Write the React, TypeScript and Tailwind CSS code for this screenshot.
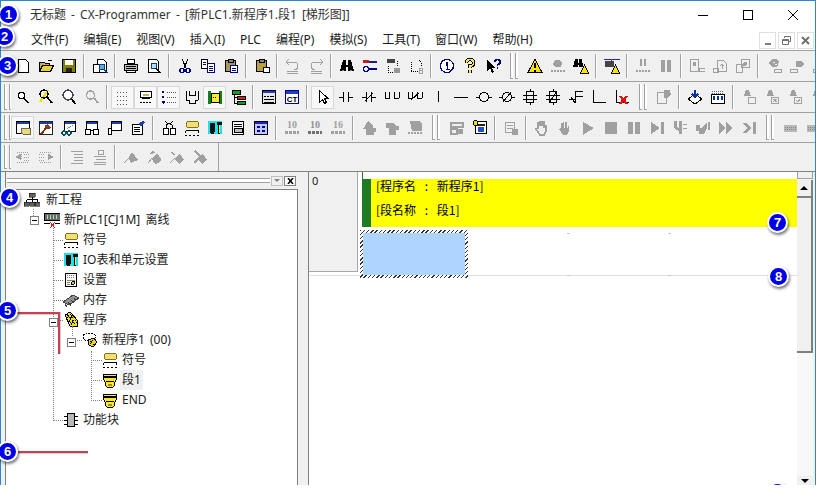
import type { ReactNode } from 'react';

const G = '#a0a0a0';
const K = '#000';

const num = (s: string, fill: string) => (
  <text x="8" y="8" textAnchor="middle" fontSize="10" fontWeight="700" fontFamily="'Liberation Serif', serif" fill={fill}>{s}</text>
);

// toolbar bitmaps, redrawn on a 16px grid
const icons: Record<string, ReactNode> = {
  newdoc: <path d="M3.5 1.5h7l3 3v10h-10z" fill="#fff" stroke={K} />,
  open: <><path d="M1.5 13.5v-9h5l1 1h4v2" fill="#c8b040" stroke={K} /><path d="M1.5 13.5l3-6h11l-3 6z" fill="#e8d040" stroke={K} /><path d="M10 3q2-2 4 0" fill="none" stroke={K} /></>,
  save: <><rect x="1.5" y="1.5" width="13" height="13" fill="#808000" stroke={K} /><rect x="4" y="2" width="8" height="5" fill="#fff" /><rect x="5" y="10" width="6" height="4" fill="#222" /></>,
  pdoc: <><path d="M5.5 1.5h6l3 3v10h-9z" fill="#fff" stroke={K} /><rect x="1.5" y="6.5" width="6" height="8" fill="#fff" stroke={K} /><circle cx="10" cy="9" r="3" fill="#6ac" stroke="#048" /><path d="M12 11l3 4" stroke="#048" strokeWidth="1.5" /></>,
  print: <><path d="M4.5 1.5h7v4h-7z" fill="#fff" stroke={K} /><path d="M1.5 6.5h13v6h-13z" fill="#c0c0c0" stroke={K} /><path d="M3.5 12.5h9v2h-9z" fill="#fff" stroke={K} /><path d="M3 8h10M3 10h10" stroke={K} /></>,
  preview: <><path d="M2.5 1.5h8l2 2v11h-10z" fill="#fff" stroke={K} /><circle cx="8" cy="8" r="3" fill="#bde" stroke="#048" /><path d="M10 10l4 5" stroke={K} strokeWidth="1.5" /></>,
  cut: <><path d="M5 1l4 9M11 1l-4 9" stroke={K} /><circle cx="5" cy="12.5" r="2" fill="none" stroke="#008" strokeWidth="1.5" /><circle cx="11" cy="12.5" r="2" fill="none" stroke="#008" strokeWidth="1.5" /></>,
  copy: <><path d="M1.5 1.5h6v9h-6z" fill="#fff" stroke={K} /><path d="M7.5 5.5h7v9h-7z" fill="#fff" stroke="#008" /><path d="M3 4h3M3 6h3M9 8h4M9 10h4M9 12h4" stroke="#008" /></>,
  paste: <><path d="M2.5 2.5h10v11h-10z" fill="#a89860" stroke={K} /><rect x="5" y="1" width="5" height="3" fill="#888" stroke={K} /><path d="M7.5 7.5h7v7h-7z" fill="#fff" stroke="#008" /><path d="M9 10h4M9 12h4" stroke="#008" /></>,
  paste2: <><path d="M2.5 2.5h10v11h-10z" fill="#b8a040" stroke={K} /><rect x="5" y="1" width="5" height="3" fill="#888" stroke={K} /><rect x="9.5" y="9.5" width="6" height="5" fill="#fff" stroke={K} /></>,
  undo: <path d="M4 7l-3-3 3-3M2 4h7q4 0 4 4t-4 3M2 13h11M2 15h11" fill="none" stroke={G} />,
  redo: <path d="M12 7l3-3-3-3M14 4H7q-4 0-4 4t4 3M3 13h11M3 15h11" fill="none" stroke={G} />,
  binoc: <><path d="M4 2h3v5h2V2h3l3 11H9V9H7v4H1z" fill={K} /><path d="M3 12h2M11 12h2" stroke="#888" /></>,
  tools: <><rect x="1" y="2" width="6" height="3" fill="#c02020" /><rect x="7" y="3" width="8" height="2" fill="#202080" /><circle cx="4" cy="11" r="2.5" fill="none" stroke="#008" strokeWidth="1.5" /><path d="M7 11h8" stroke="#008" strokeWidth="2" /></>,
  xref: <><rect x="2" y="1" width="8" height="4" fill="#444" /><path d="M3 8v6M3 14h5M12 3v5" stroke={K} strokeDasharray="1 1" /><rect x="9" y="10" width="6" height="5" fill="#999" /></>,
  xrefb: <><path d="M3 4v9M3 13h7M11 2l2 2v5" fill="none" stroke={K} strokeDasharray="1 1" /><path d="M11 10h2.500a1 1 0 010 2.500H11zM11 12.500h3v2.500h-3z" fill="none" stroke={G} /></>,
  info: <><circle cx="8" cy="8" r="6.500" fill="#fff" stroke="#000080" strokeWidth="1.400" /><path d="M6.500 7h2v4.500M6.500 11.500h4M8 4v1.500" stroke="#000080" strokeWidth="1.400" fill="none" /></>,
  help: <><path d="M4.500 5q0-3.500 3.500-3.500t3.500 3.500-3.500 3v2M8 12v2.500" fill="none" stroke={K} strokeWidth="3.400" /><path d="M4.500 5q0-3.500 3.500-3.500t3.500 3.500-3.500 3v2M8 12v2.500" fill="none" stroke="#f8e840" strokeWidth="1.400" /></>,
  whatis: <><path d="M2 2v11l3-3 2 5 2-1-2-4h4z" fill={K} /><path d="M10 4q0-2.500 2.500-2.500T15 4t-2.500 2.500V8M12.500 9v2" fill="none" stroke="#000080" strokeWidth="1.800" /></>,
  warn: <><path d="M8 1L1 14.500h14z" fill="#ffe000" stroke={K} /><path d="M8 5v5M8 11.500v2" stroke={K} strokeWidth="1.500" /></>,
  gfoot: <><path d="M5 2h5l2 3-1 4H5L3 6z" fill={G} /><path d="M1 13h14" stroke={G} strokeWidth="2" strokeDasharray="2 1" /></>,
  binw: <><path d="M2 1h2.500v4H6V1h2.500l2 8H6V7H5v2H0z" fill={K} /><path d="M11.500 7l4 8h-8z" fill="#ffe000" stroke={K} /></>,
  comm: <><path d="M0 1h16" stroke="#2020c0" /><path d="M7 1v2" stroke="#c02020" /><rect x="1" y="3" width="9" height="6" fill="#444" /><path d="M11.500 7l4 8h-8z" fill="#ffe000" stroke={K} /></>,
  gpause: <><path d="M5 1h2v7H5zM9 1h2v7H9z" fill={G} /><path d="M1 13h14" stroke={G} strokeWidth="2" strokeDasharray="2 1" /></>,
  pause: <path d="M3 2h4v12H3zM9 2h4v12H9z" fill={G} />,
  gdoc: <><path d="M1.500 1.500h8v12h-8z" fill="none" stroke={G} /><path d="M4 4h3v4H4z" fill={G} /><rect x="10" y="10" width="6" height="3" fill="none" stroke={G} /></>,
  gup: <><path d="M5.500 2.500h6l3 3v8h-9z" fill="none" stroke={G} /><path d="M10 11V6M8 8l2-2 2 2" fill="none" stroke={G} /><rect x="1" y="10" width="5" height="4" fill="none" stroke={G} /></>,
  gcmp: <><path d="M1.500 6.500h6v8h-6z" fill="none" stroke={G} /><path d="M6.500 1.500h8v8h-8z" fill="none" stroke={G} /><circle cx="10" cy="6" r="2" fill={G} /></>,
  gbug: <><path d="M6 1h5l2 3-2 5H6L3 5z" fill={G} /><path d="M7 4h2M9 6h2" stroke="#f0f0f0" /><rect x="8" y="11" width="7" height="3" fill="none" stroke={G} /></>,
  gsmall: <><path d="M7 3h6l2 3-3 3H7z" fill={G} /><rect x="1" y="11" width="7" height="3" fill="none" stroke={G} /></>,
  find: <><circle cx="6.500" cy="6.500" r="3" fill="#fff" stroke={K} strokeWidth="1.200" /><path d="M9 9l4 5" stroke={K} strokeWidth="1.500" /></>,
  findy: <><path d="M10 1L2 13" stroke="#f0e000" strokeWidth="2" /><circle cx="6" cy="5" r="4" fill="none" stroke={K} strokeWidth="1.300" /><path d="M9 8l5 6" stroke={K} strokeWidth="1.800" /></>,
  findk: <><circle cx="7" cy="6" r="5" fill="#fff" stroke="#445" strokeWidth="1.300" /><path d="M10.500 10l4 5" stroke={K} strokeWidth="1.800" /></>,
  findg: <><circle cx="6.500" cy="6" r="4" fill="none" stroke={G} strokeWidth="1.500" /><path d="M10 9l4 5" stroke={G} strokeWidth="2" /></>,
  grid: <path d="M2 3h12M2 7h12M2 11h12M2 15h12" stroke="#555" strokeDasharray="1 2" />,
  note: <><path d="M2.500 2.500h11v6h-11z" fill="#fff" stroke={K} /><path d="M4 9.500h8" stroke={K} /><rect x="5" y="5" width="6" height="2" fill="#c0b060" /><path d="M2 13h12" stroke={K} strokeDasharray="2 1" /></>,
  list: <><path d="M6 3h9M6 8h9M6 13h9" stroke="#555" strokeDasharray="1 1" /><path d="M2 2v2M2 7v2M1 13h3M2.500 12v3" stroke="#008" strokeWidth="1.500" /></>,
  hh: <path d="M2 2v9M14 2v9M5 2v4h6V2M2 11h3v3h6v-3h3" fill="none" stroke={K} />,
  ylist: <><path d="M1 2h3v13H1zM12 2h3v13h-3z" fill="#108010" /><rect x="4" y="4" width="8" height="9" fill="#ffe830" stroke={K} /><path d="M6 8h4" stroke={K} strokeDasharray="1 1" /></>,
  gtree: <><rect x="2" y="1" width="8" height="4" fill="#10a010" stroke={K} /><rect x="7" y="7" width="8" height="3" fill="#e02020" stroke={K} /><rect x="7" y="12" width="8" height="3" fill="#10a010" stroke={K} /><path d="M4 5v9h3M4 8h3" fill="none" stroke={K} /></>,
  sma: <><rect x="1.500" y="1.500" width="13" height="13" fill="#e8e8e8" stroke={K} /><rect x="2" y="2" width="12" height="2" fill="#2040c0" /><path d="M3 7h2M6 7h2M9 7h4M3 10h10M3 13h10" stroke={K} /></>,
  ct: <><rect x="1.500" y="1.500" width="13" height="13" fill="#fff" stroke="#008" /><rect x="2" y="2" width="12" height="3" fill="#2040c0" /><text x="8" y="13" textAnchor="middle" fontSize="8" fontWeight="700" fontFamily="'Liberation Sans', sans-serif" fill={K}>CT</text></>,
  arrow: <path d="M4.500 1.500v12l3-3 2 4 2-1-2-4h3.500z" fill="#fff" stroke={K} />,
  no: <path d="M1 8h5M5.500 3v10M10.500 3v10M11 8h4" stroke={K} fill="none" />,
  nc: <path d="M1 8h5M5.500 3v10M10.500 3v10M11 8h4M4 12l8-8" stroke={K} fill="none" />,
  pno: <path d="M1 9h5M5.500 3v7M10.500 3v7M11 9h4M1 3v6M15 3v6" stroke={K} fill="none" />,
  pnc: <path d="M1 9h5M5.500 3v7M10.500 3v7M11 9h4M1 3v6M15 3v6M4 11l8-7" stroke={K} fill="none" />,
  vline: <path d="M8 2v11" stroke={K} />,
  hline: <path d="M1 8h14" stroke={K} />,
  coil: <><circle cx="8" cy="8" r="4.500" fill="none" stroke={K} /><path d="M0 8h3.500M12.500 8H16" stroke={K} /></>,
  ncoil: <><circle cx="8" cy="8" r="4.500" fill="none" stroke={K} /><path d="M0 8h3.500M12.500 8H16M4 13l8-10" stroke={K} /></>,
  inst: <path d="M8 0v2M4.500 2.500h7v11h-7zM8 14v2M1 6h14M1 10h14" fill="none" stroke={K} />,
  nin: <path d="M8 0v2M4.500 2.500h7v11h-7zM8 14v2M1 6h14M1 10h14M4 14l8-12" fill="none" stroke={K} />,
  func: <path d="M15 2H7v5h8M7 7v7M1 10h6M3 8l4 6" fill="none" stroke={K} />,
  corner: <path d="M2.500 1v12.500H15" fill="none" stroke={K} />,
  del: <><path d="M2.500 1v12.500H15" fill="none" stroke={K} /><path d="M6 7l7 8M13 7l-7 8" stroke="#e01010" strokeWidth="2.500" /></>,
  gcard: <><path d="M1.500 3.500h9v11h-9z" fill="none" stroke={G} /><path d="M8 1h6l1 5-4 3H8z" fill={G} /></>,
  envl: <><path d="M1 10l7-5 7 5-7 5z" fill="#fff" stroke={K} /><path d="M8 1v7M5 5l3 3 3-3" fill="none" stroke="#0830a0" strokeWidth="2" /></>,
  kbd: <><rect x="1.500" y="5.500" width="13" height="9" fill="#fff" stroke={K} /><path d="M2 2h12M2 4h12" stroke="#668" strokeDasharray="1 1" /><path d="M4 7v4M8 7v4M12 7v4" stroke="#0830a0" strokeWidth="1.500" /></>,
  gbell: <><path d="M5 1h3l2 6H3z" fill={G} /><rect x="7.500" y="8.500" width="7" height="6" fill="none" stroke={G} /></>,
  gbellx: <><path d="M5 1h3l2 6H3z" fill={G} /><rect x="7.500" y="8.500" width="7" height="6" fill="none" stroke={G} /><path d="M9 10l4 3M13 10l-4 3" stroke={G} /></>,
  gbellv: <><path d="M5 1h3l2 6H3z" fill={G} /><rect x="7.500" y="8.500" width="7" height="6" fill="none" stroke={G} /><path d="M9 11l2 2 2-3" stroke={G} fill="none" /></>,
  win: <><rect x="1.500" y="1.500" width="13" height="12" fill="#fff" stroke={K} /><rect x="2" y="2" width="12" height="2" fill="#2040a0" /><path d="M6 13V8h9v6H8z" fill="#e8d880" stroke="#665" /></>,
  hammer: <><rect x="1.500" y="1.500" width="13" height="13" fill="#fff" stroke="#222" /><rect x="2" y="2" width="12" height="2" fill="#2040a0" /><path d="M3 14l6-7" stroke="#803000" strokeWidth="2" /><path d="M6 6l4-2 3 4-3 1z" fill="#804020" /></>,
  winglass: <><rect x="3.500" y="1.500" width="11" height="10" fill="#fff" stroke={K} /><rect x="4" y="2" width="10" height="2" fill="#2040a0" /><path d="M6 9l6-4" stroke="#888" strokeDasharray="1 1" /><circle cx="3" cy="13" r="2" fill="none" stroke="#005060" strokeWidth="1.500" /><circle cx="8" cy="13" r="2" fill="none" stroke="#005060" strokeWidth="1.500" /></>,
  winbox: <><rect x="2.500" y="1.500" width="11" height="9" fill="#fff" stroke={K} /><rect x="3" y="2" width="10" height="2" fill="#2040a0" /><rect x="1.500" y="9.500" width="5" height="5" fill="#fff" stroke={K} /><rect x="9.500" y="9.500" width="5" height="5" fill="#fff" stroke={K} /></>,
  winl: <><rect x="4.500" y="1.500" width="10" height="9" fill="#fff" stroke={K} /><rect x="5" y="2" width="9" height="2" fill="#2040a0" /><rect x="1.500" y="8.500" width="3" height="6" fill="#fff" stroke={K} /></>,
  prop: <><path d="M2.500 4.500h10v10h-10z" fill="#fff" stroke={K} /><path d="M4 7h6M4 9h6M4 11h6" stroke={K} /><path d="M8 4l5-3 2 2-4 3z" fill="#2040a0" /></>,
  net: <><rect x="2.500" y="8.500" width="5" height="6" fill="#fff" stroke={K} /><rect x="9.500" y="8.500" width="5" height="6" fill="#fff" stroke={K} /><path d="M5 8V5l3-2M11 8V5L8 3M4 1l3 3M12 1L9 4" fill="none" stroke={K} /></>,
  sym: <><rect x="2.500" y="1.500" width="12" height="6" rx="2" fill="#f4e070" stroke="#807020" /><path d="M1.500 10.500h13v2M1.500 10.500v2" fill="none" stroke={K} /><path d="M1 15h2M5 15h2M9 15h2M13 15h2" stroke={K} /></>,
  ioc: <><path d="M1 1h14v13H1z" fill="#20e0f0" /><path d="M3 3h5v8l-1 3H4l-1-3z" fill="#101010" /><path d="M10 2h5v3h-2v9h-2V5h-1z" fill="#101010" /><path d="M12 5h1v8h-1z" fill="#f8e840" /></>,
  panel: <><rect x="2.500" y="1.500" width="11" height="13" fill="#fff" stroke={K} /><path d="M4 4h8M4 6h8" stroke={K} /><path d="M4 8h8v4H4z" fill="#c0c0c0" stroke={K} /></>,
  memo: <><rect x="2.500" y="1.500" width="11" height="13" fill="#f8f8f0" stroke={K} /><path d="M4 3.500h8M4 5.500h8" stroke="#808080" strokeDasharray="1 1" /><path d="M4 8h8M4 10h3M4 12h3" stroke="#808080" /><circle cx="10" cy="11" r="1.500" fill="#e8d020" stroke={K} /></>,
  grid16: <><rect x="1.500" y="1.500" width="13" height="13" fill="#fff" stroke={K} /><rect x="2" y="2" width="12" height="12" fill="#c0c8ff" /><rect x="2" y="2" width="12" height="2" fill="#2020c0" /><path d="M4 7h3M9 7h3M4 11h3M9 11h3" stroke="#0000a0" strokeWidth="2" /></>,
  g10: <>{num('10', G)}<path d="M1 12h14" stroke={G} strokeWidth="3" strokeDasharray="3 1" /></>,
  g10b: <>{num('10', '#909090')}<path d="M1 12h14" stroke="#707070" strokeWidth="3" strokeDasharray="3 1" /></>,
  g16: <>{num('16', G)}<path d="M1 12h14" stroke={G} strokeWidth="3" strokeDasharray="3 1" /></>,
  gupa: <path d="M7 1l5 4v3h3v4h-2v3H5V9H2z" fill={G} />,
  gupb: <path d="M2 3h7l3 3h3v4h-3v5H5V8H2z" fill={G} />,
  gupc: <><path d="M3 1h9l3 3v7H5z" fill={G} /><path d="M1 13h14" stroke={G} strokeWidth="2" strokeDasharray="2 1" /></>,
  mon: <><path d="M1.500 2.500h12v4h-12zM1.500 8.500h6v5h-6z" fill="none" stroke={G} strokeWidth="2" /><path d="M9 9h5v5H9z" fill={G} /></>,
  monc: <><rect x="3.500" y="1.500" width="11" height="12" fill="#fff" stroke={K} /><rect x="5" y="4" width="8" height="2" fill="#222" /><rect x="6" y="7" width="6" height="5" fill="#2050d0" /><circle cx="3.500" cy="3" r="2.500" fill="#f0e000" stroke={K} /></>,
  gmon: <><path d="M2.500 2.500h9v10h-9z" fill="none" stroke={G} strokeWidth="1.500" /><path d="M4 5h6M4 8h6" stroke={G} /><path d="M9 9h6v6H9z" fill={G} /></>,
  hand: <path d="M4 8V3h2v3-4h2v4-4h2v5l2-1v5l-2 4H6L2 9z" fill="none" stroke={G} strokeWidth="1.500" />,
  handb: <><path d="M4 8V3h2v3-4h2v4-4h2v5l2-1v5l-2 4H6L2 9z" fill={G} /><path d="M7 2v6M10 3v5" stroke="#f0f0f0" /></>,
  play: <path d="M3 2l11 6-11 7z" fill={G} />,
  stop: <path d="M2 2h12v12H2z" fill={G} />,
  pausewide: <path d="M2 2h5v12H2zM9 2h5v12H9z" fill={G} />,
  stepend: <path d="M2 2l9 6-9 6zM12 2h3v12h-3z" fill={G} />,
  stepin: <path d="M2 1h2v6l3 2V1h2v12H7v-2L2 7zM11 4h4M11 8h4" fill={G} stroke={G} />,
  stepout: <path d="M1 5h4v3h2l5-6v6l-3 6H4v-3H1zM13 2h2v8h-2z" fill={G} />,
  fwd: <path d="M1 2l7 6-7 6zM8 2l7 6-7 6z" fill={G} />,
  tostop: <path d="M1 3h4l6 5-6 5H1l5-5zM12 2h3v12h-3z" fill={G} />,
  gkey: <><rect x="1" y="5" width="13" height="7" rx="1" fill="#b8b8b8" /><path d="M2 7h11M2 9h11" stroke="#888" strokeDasharray="1 1" /></>,
  gindl: <path d="M2 3h12M2 13h12M9 5h5M9 8h5M9 11h5M1 8l5-3v6z" fill={G} stroke={G} strokeDasharray="1 1" />,
  gindr: <path d="M2 3h12M2 13h12M1 5h5M1 8h5M1 11h5M15 8l-5-3v6z" fill={G} stroke={G} strokeDasharray="1 1" />,
  glines: <path d="M2 2h12M5 5h9M5 8h9M5 11h9M2 14h12" stroke={G} />,
  glinesb: <><path d="M6 1h5v4H6z" fill="none" stroke={G} /><path d="M2 7h12M4 10h10M2 13h12M2 15h12" stroke={G} /></>,
  gpin: <path d="M1 14l5-6 3-5 6 8-7 3-2-4z" fill={G} />,
  gpin2: <><path d="M4 5l3-3 2 2M8 8l3-3 4 6-5 4-4-5z" fill={G} stroke={G} /><path d="M2 14l4-5" stroke={G} /></>,
  gpin3: <><path d="M8 7l3-2 4 6-5 4-4-5z" fill={G} /><path d="M1 14l5-5M2 3l4 3" stroke={G} /></>,
  gpin4: <><path d="M8 7l3-2 4 6-5 4-4-5z" fill={G} /><path d="M3 2l6 6M2 14l5-5" stroke={G} strokeWidth="1.500" /></>,
  proj: <><path d="M5 1h6v4H5zM0 10h5v4H0zM5.500 10h5v4h-5zM11 10h5v4h-5z" fill="#606060" stroke={K} strokeWidth="0.500" /><path d="M8 5v5M2.500 7.500h11M2.500 7.500V10M13.500 7.500V10" fill="none" stroke={K} /></>,
  plc: <><rect x="0.500" y="1.500" width="16" height="7" fill="#607060" stroke={K} /><path d="M3 3v4M6 3v4M9 3v4M12 3v4" stroke="#ccc" /><path d="M0 11h6M11 11h5" stroke={K} /><path d="M6 10l5 6M11 10l-5 6" stroke="#d02020" /></>,
  chip: <><path d="M0 10l10-7 6 3-10 7z" fill="#909090" stroke="#404040" /><path d="M2 12l2 3M5 10l3 4M8 8l3 3M11 6l2 3" stroke="#404040" /></>,
  prog: <><path d="M2 3l5-3 8 9-1 6-7-1z" fill="#f0e020" stroke={K} /><path d="M4 2l9 11M7 2l7 9M3 6l8 9M5 3l-1 4M9 5l-3 4M11 8l-3 4" stroke={K} strokeDasharray="1 1" /></>,
  sect: <><path d="M1.500 2.500h13v5l-2 3v3l-2 2h-5l-2-2v-3l-2-3z" fill="#f8e830" stroke={K} /><path d="M2 5h12" stroke={K} strokeWidth="2" /><path d="M4 9h8" stroke={K} /><path d="M6 12h4v2H6z" fill="#a09020" /></>,
  task: <><path d="M1 3l3-2h6l3 2 1 3-2 2H3L1 6z" fill="#fff" stroke={K} strokeDasharray="2 1" /><path d="M6 8l6-2 3 4-4 5-4-2z" fill="#e8d820" stroke={K} /><path d="M8 9l4 4M11 8l-3 4" stroke={K} strokeDasharray="1 1" /></>,
  fb: <><rect x="4.500" y="1.500" width="7" height="13" fill="#b8b8b8" stroke={K} /><path d="M1 4h3M1 8h3M1 12h3M12 4h3M12 8h3M12 12h3" stroke={K} /></>,
};

function Icon({ name, className = 'w-4 h-4' }: { name: string; className?: string }) {
  return (
    <svg viewBox="0 0 16 16" shapeRendering="crispEdges" className={`${className} shrink-0`}>
      {icons[name]}
    </svg>
  );
}

function Tool({ name, pressed }: { name: string; pressed?: boolean }) {
  return (
    <div
      className={`w-[23px] h-[23px] flex items-center justify-center shrink-0 ${pressed ? 'bg-[#f8f8f8] border border-[#d8d8d8]' : ''}`}
    >
      <Icon name={name} />
    </div>
  );
}

function Sep() {
  return (
    <div className="w-2 flex justify-center shrink-0">
      <div className="w-px h-[24px] bg-[#a0a0a0] border-r border-white box-content" />
    </div>
  );
}

function Grip({ first }: { first?: boolean }) {
  return (
    <div className={`${first ? 'w-[10px] pl-[3px] justify-start' : 'w-[19px] justify-center'} flex shrink-0 gap-[2px] self-stretch py-[2px]`}>
      <div className="w-[3px] border-l border-b border-[#a0a0a0] bg-white" />
      <div className="w-[3px] border-l border-b border-[#a0a0a0] bg-white" />
    </div>
  );
}

// * marks a pressed button, | a separator, # a gripper
function ToolRow({ items, className = '' }: { items: string; className?: string }) {
  return (
    <div className={`flex items-center overflow-hidden ${className}`}>
      {items.split(' ').map((it, i) => {
        if (it === '|') return <Sep key={i} />;
        if (it === '#') return <Grip key={i} first={i === 0} />;
        if (it.startsWith('*')) return <Tool key={i} name={it.slice(1)} pressed />;
        return <Tool key={i} name={it} />;
      })}
    </div>
  );
}

const rows = [
  'newdoc open save | pdoc | print preview | cut copy paste | paste2 | undo redo | binoc tools xref xrefb | info help whatis # warn gfoot binw | comm | gpause pause | gdoc gup gcmp | gbug gsmall gsmall',
  '# find findy findk findg | *grid *note *list hh *ylist gtree | sma ct | *arrow no nc pno pnc vline hline coil ncoil inst nin func corner del # gcard | envl kbd | gbell gbellx gbellv gbell',
  '# *win hammer winglass winbox winl prop | net sym ioc panel grid16 | g10 g10b g16 | gupa gupb gupc # mon monc | gmon | hand handb play stop pausewide stepend stepin stepout fwd tostop # gkey gkey',
];

const menus = ['文件(F)', '编辑(E)', '视图(V)', '插入(I)', 'PLC', '编程(P)', '模拟(S)', '工具(T)', '窗口(W)', '帮助(H)'];

const tree = [
  { pad: 'pl-[18px]', stub: '', icon: 'proj', text: '新工程', gap: 'ml-[6px]' },
  { pad: 'pl-[38px]', stub: '', icon: 'plc', text: '新PLC1[CJ1M] 离线' },
  { pad: 'pl-[47px]', stub: 'w-[10px]', icon: 'sym', text: '符号' },
  { pad: 'pl-[47px]', stub: 'w-[10px]', icon: 'ioc', text: 'IO表和单元设置' },
  { pad: 'pl-[47px]', stub: 'w-[10px]', icon: 'memo', text: '设置' },
  { pad: 'pl-[47px]', stub: 'w-[10px]', icon: 'chip', text: '内存' },
  { pad: 'pl-[47px]', stub: 'w-[10px]', icon: 'prog', text: '程序' },
  { pad: 'pl-[66px]', stub: 'w-[10px]', icon: 'task', text: '新程序1 (00)' },
  { pad: 'pl-[85px]', stub: 'w-[11px]', icon: 'sym', text: '符号' },
  { pad: 'pl-[85px]', stub: 'w-[11px]', icon: 'sect', text: '段1', gap: 'ml-[2px] px-[2px] bg-[#f0f0f0]' },
  { pad: 'pl-[85px]', stub: 'w-[11px]', icon: 'sect', text: 'END' },
  { pad: 'pl-[47px]', stub: 'w-[10px]', icon: 'fb', text: '功能块' },
];

function Expander({ className }: { className: string }) {
  return (
    <div className={`absolute w-[9px] h-[9px] border border-[#808080] bg-white flex items-center justify-center ${className}`}>
      <div className="w-[5px] h-px bg-black" />
    </div>
  );
}

function Badge({ n, className }: { n?: string; className: string }) {
  return (
    <div
      className={`absolute w-[21px] h-[21px] rounded-full bg-[#0000e6] border-2 border-white shadow-[1px_2px_3px_rgba(0,0,0,0.55)] flex items-center justify-center text-white text-[13px] font-bold font-['Liberation_Sans',sans-serif] ${className}`}
    >
      {n}
    </div>
  );
}

function Dot({ className }: { className: string }) {
  return <div className={`absolute w-[3px] h-px bg-[#c8c8c8] ${className}`} />;
}

export default function App() {
  return (
    <div className="w-[816px] h-[504px] bg-white overflow-hidden text-[12px] leading-none text-[#1a1a1a] [word-spacing:2px] font-['Noto_Sans','Noto_Sans_CJK_SC',sans-serif]">
      <div className="relative h-[485px] overflow-hidden">
        <div className="h-full flex flex-col border-x border-t border-[#2b87c6]">
          {/* title bar */}
          <div className="h-[28px] flex items-center shrink-0 bg-white">
            <span className="ml-[29px] text-[12px] text-[#333] whitespace-nowrap">无标题 - CX-Programmer - [新PLC1.新程序1.段1 [梯形图]]</span>
            <div className="ml-auto flex items-center gap-[35px] pr-[17px]">
              <div className="w-[10px] h-px bg-black" />
              <div className="w-[10px] h-[10px] border border-black" />
              <svg viewBox="0 0 10 10" className="w-[10px] h-[10px]"><path d="M0 0l10 10M10 0L0 10" stroke="#000" /></svg>
            </div>
          </div>

          {/* menu bar */}
          <div className="h-[21px] flex items-center shrink-0 bg-white pl-[30px] pt-[1px] gap-[15px]">
            {menus.map((m) => (
              <span key={m} className="whitespace-nowrap">{m}</span>
            ))}
            <div className="ml-auto flex gap-[2px] pr-[1px] text-[#808080]">
              <div className="w-[17px] h-[17px] border border-[#e0e0e0] flex items-end justify-center pb-[3px]"><div className="w-[6px] h-[2px] bg-[#808080]" /></div>
              <div className="w-[17px] h-[17px] border border-[#e0e0e0] flex items-center justify-center">
                <svg viewBox="0 0 9 9" className="w-[9px] h-[9px]"><path d="M2.500 2V.5h6v5H7M.5 3.500h6v5h-6zM.5 4.500h6" fill="none" stroke="#707070" /></svg>
              </div>
              <div className="w-[17px] h-[17px] border border-[#e0e0e0] flex items-center justify-center">
                <svg viewBox="0 0 9 9" className="w-[9px] h-[9px]"><path d="M1 1l7 7M8 1L1 8" stroke="#707070" strokeWidth="2" /></svg>
              </div>
            </div>
          </div>

          {/* tool bars */}
          <div className="shrink-0 bg-[#f0f0f0]">
            <ToolRow items={rows[0]} className="border-t border-[#a0a0a0] pl-[10px] h-[31px]" />
            <ToolRow items={rows[1]} className="border-t border-[#a0a0a0] h-[31px]" />
            <ToolRow items={rows[2]} className="border-t border-[#a0a0a0] h-[30px]" />
            <div className="border-t border-[#a0a0a0] h-[29px]">
              <ToolRow
                items="# gindl gindr | glines glinesb | gpin gpin2 gpin3 gpin4"
                className="h-full w-[218px] border-r border-[#a0a0a0]"
              />
            </div>
          </div>

          {/* panes */}
          <div className="flex-1 min-h-0 flex bg-[#f0f0f0] border-t border-[#808080]">
            <div className="w-[293px] ml-1 flex flex-col shrink-0">
              <div className="h-[17px] flex items-center shrink-0 pl-[1px] pr-[2px] border-l border-[#808080]">
                <div className="flex-1 h-[5px] border-y border-[#a0a0a0] bg-white mr-px" />
                <div className="w-[12px] h-[10px] border border-[#c0c0c0] flex items-center justify-center">
                  <div className="border-x-[3px] border-x-transparent border-t-[3px] border-t-[#808080]" />
                </div>
                <div className="w-[12px] h-[10px] border border-[#808080] bg-white flex items-center justify-center ml-px">
                  <svg viewBox="0 0 7 6" className="w-[7px] h-[6px]"><path d="M1 0l5 6M6 0L1 6" stroke="#000" strokeWidth="1.500" /></svg>
                </div>
              </div>
              <div className="relative flex-1 bg-white border-t border-l border-r border-[#808080]">
                {tree.map((r) => (
                  <div key={r.text + r.icon} className={`h-5 flex items-center ${r.pad}`}>
                    {r.stub && <div className={`${r.stub} border-t border-dotted border-[#808080] shrink-0`} />}
                    <Icon name={r.icon} />
                    <span className={`${r.gap ?? 'ml-1'} h-5 flex items-center whitespace-nowrap`}>
                      {r.text}
                    </span>
                  </div>
                ))}
                {/* tree connectors */}
                <div className="absolute left-[27px] top-[19px] h-[7px] border-l border-dotted border-[#808080]" />
                <div className="absolute left-[47px] top-[38px] h-[193px] border-l border-dotted border-[#808080]" />
                <div className="absolute left-[66px] top-[136px] h-[10px] border-l border-dotted border-[#808080]" />
                <div className="absolute left-[85px] top-[161px] h-[50px] border-l border-dotted border-[#808080]" />
                <Expander className="left-[24px] top-[26px]" />
                <Expander className="left-[43px] top-[128px]" />
                <Expander className="left-[61px] top-[148px]" />
              </div>
            </div>

            <div className="ml-[10px] mr-[2px] flex-1 flex min-w-0 bg-white border-l border-[#808080]">
              {/* ladder */}
              <div className="flex-1 relative min-w-0">
                <div className="flex h-[104px] border-b border-[#e0e0e0]">
                  <div className="w-[49px] h-[100px] bg-[#f0f0f0] border-b border-r border-[#a8a8a8] pl-[3px] pt-[3px] text-[11px]">0</div>
                  <div className="flex-1 pl-[4px] pt-[7px]">
                    <div className="flex h-[48px] relative">
                      <div className="w-[9px] bg-[#1f7c22]" />
                      <div className="flex-1 bg-[#ffff00] pl-[5px] font-['Noto_Sans_CJK_SC',sans-serif] text-[12px] text-black [word-spacing:6px]">
                        <div className="h-[13px] leading-[13px] whitespace-nowrap">[程序名 : 新程序1]</div>
                        <div className="mt-[11px] h-[13px] leading-[13px] whitespace-nowrap">[段名称 : 段1]</div>
                      </div>
                    </div>
                    <div className="w-[108px] h-[48px] mt-[3px] -ml-[2px] p-[3px] bg-[repeating-linear-gradient(135deg,#333_0,#333_1px,#fff_1px,#fff_3px)]">
                      <div className="w-full h-full bg-[#add5ff]" />
                    </div>
                  </div>
                </div>
                <div className="absolute left-[53px] top-0 w-px h-[7px] bg-[#1f7c22]" />
                <Dot className="left-[258px] top-[61px]" />
                <Dot className="left-[359px] top-[61px]" />
                <Dot className="left-[258px] top-[103px]" />
                <Dot className="left-[359px] top-[103px]" />
              </div>

              {/* scroll bar */}
              <div className="w-[16px] shrink-0 flex flex-col bg-[#f4f4f4]">
                <div className="h-[7px] bg-[#f0f0f0] border border-[#a0a0a0] border-t-0 shrink-0" />
                <div className="h-[18px] mt-[1px] bg-[#f0f0f0] border-b-2 border-r-2 border-[#808080] flex items-center justify-center shrink-0">
                  <div className="border-x-[4px] border-x-transparent border-b-[4px] border-b-black" />
                </div>
                <div className="h-[155px] bg-[#f0f0f0] border-b-2 border-r-2 border-[#808080] shrink-0" />
                <div className="flex-1 bg-[#f8f8f8]" />
                <div className="h-[9px] bg-[#f0f0f0] flex items-center justify-center shrink-0">
                  <div className="border-x-[4px] border-x-transparent border-t-[4px] border-t-black" />
                </div>
              </div>
            </div>
          </div>
        </div>

        {/* callout lines and numbers */}
        <div className="absolute left-[14px] top-[312px] w-[46px] h-[2px] bg-[#c8404f] shadow-[0_1px_1px_rgba(0,0,0,0.2)]" />
        <div className="absolute left-[58px] top-[312px] w-[2px] h-[42px] bg-[#c8404f] shadow-[1px_0_1px_rgba(0,0,0,0.2)]" />
        <div className="absolute left-[16px] top-[451px] w-[72px] h-[2px] bg-[#c8404f] shadow-[0_1px_1px_rgba(0,0,0,0.2)]" />
        <Badge n="1" className="left-[-2px] top-[4px]" />
        <Badge n="2" className="left-[-6px] top-[26px]" />
        <Badge n="3" className="left-[-3px] top-[55px]" />
        <Badge n="4" className="left-[-1px] top-[187px]" />
        <Badge n="5" className="left-[-3px] top-[300px]" />
        <Badge n="6" className="left-[-3px] top-[441px]" />
        <Badge n="7" className="left-[767px] top-[212px]" />
        <Badge n="8" className="left-[768px] top-[266px]" />
        <Badge className="left-[767px] top-[482px]" />
      </div>
    </div>
  );
}
